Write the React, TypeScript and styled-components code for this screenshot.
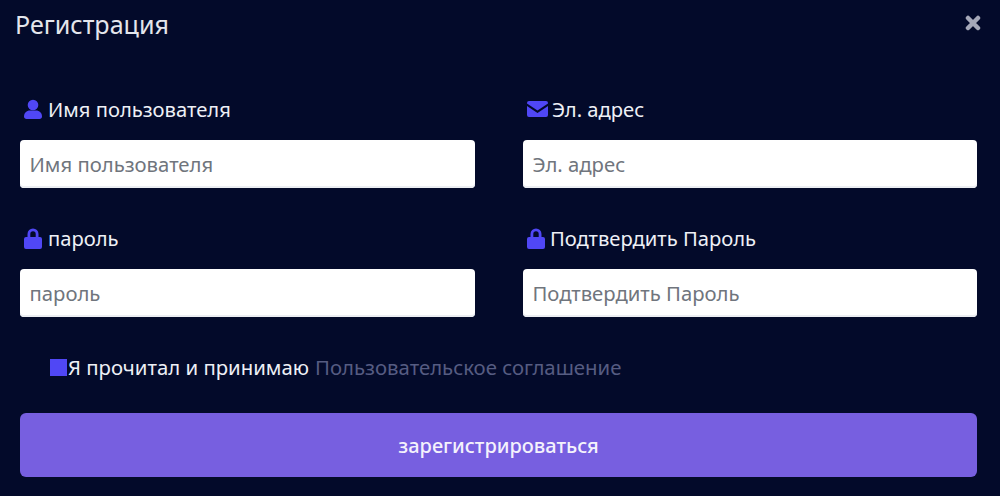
import React from "react";
import styled, { createGlobalStyle } from "styled-components";

const Global = createGlobalStyle`
  html, body { margin: 0; padding: 0; background: #030a2a; }
  * { box-sizing: border-box; }
`;

const Modal = styled.div`
  width: 1000px;
  height: 496px;
  overflow: hidden;
  background: #030a2a;
  font-family: "Noto Sans", "Open Sans", sans-serif;
  color: #eef0f6;
`;

const Header = styled.header`
  display: flex;
  justify-content: space-between;
  align-items: flex-start;
  height: 96px;
  padding: 8px 17px 0 15px;
`;

const Title = styled.h1`
  margin: 0;
  font-size: 25.1px;
  line-height: 33px;
  font-weight: 400;
  color: #e4e6ec;
`;

const Close = styled.button`
  width: 18px;
  height: 18px;
  margin-top: 7px;
  padding: 0;
  border: 0;
  background: none;
  color: #a5a8b8;
  display: flex;
`;

const Form = styled.form`
  padding: 0 23px 0 20px;
`;

const Grid = styled.div`
  display: grid;
  grid-template-columns: 455px 454px;
  column-gap: 48px;
  row-gap: 37px;
`;

const Field = styled.div`
  display: flex;
  flex-direction: column;
`;

const Label = styled.label<{ $gap: number }>`
  display: flex;
  align-items: center;
  height: 28px;
  margin-bottom: 16px;
  padding: 0 0 2px 4px;
  gap: ${(p) => p.$gap}px;
  font-size: 20.2px;
  line-height: 26px;
`;

const Input = styled.input`
  width: 100%;
  height: 48px;
  padding: 0 9.5px 1px;
  border: 0;
  border-radius: 4px;
  background: #fff;
  font: 400 20.3px "Noto Sans", "Open Sans", sans-serif;
  box-shadow: inset 0 -2px 0 #eceef2;
  &::placeholder { color: #70757d; opacity: 1; }
`;

const Agreement = styled.div`
  display: flex;
  align-items: center;
  height: 28px;
  margin-top: 36px;
  padding-left: 30px;
  font-size: 20.35px;
  line-height: 28px;
`;

const Check = styled.span`
  width: 17px;
  height: 17px;
  margin-right: 1px;
  background: #5047f5;
  flex: none;
`;

const Link = styled.span`
  margin-left: 6px;
  color: #565c82;
`;

const Submit = styled.button`
  display: block;
  width: 957px;
  height: 64px;
  margin-top: 32px;
  padding-top: 2px;
  border: 0;
  border-radius: 6px;
  background: #775fe0;
  color: #f4f2fc;
  font: 500 20px "Noto Sans", "Open Sans", sans-serif;
`;

const IconBox = styled.svg`
  flex: none;
  color: #5047f5;
`;

const User = () => (
  <IconBox width="18" height="20" viewBox="0 0 18 20" fill="currentColor">
    <circle cx="9" cy="6" r="5.300" />
    <path d="M0 17.500C0 14 2.500 11.500 6 11.500h6c3.500 0 6 2.500 6 6 0 1.400-1 2.500-2.500 2.500h-13C1 20 0 18.900 0 17.500Z" />
  </IconBox>
);

const Mail = () => (
  <IconBox width="21" height="16" viewBox="0 0 21 16" fill="currentColor">
    <path d="M2 0h17a2 2 0 0 1 2 2v.6l-10.500 7L0 2.600V2a2 2 0 0 1 2-2Z" />
    <path d="M0 5l10.500 7L21 5v9a2 2 0 0 1-2 2H2a2 2 0 0 1-2-2V5Z" />
  </IconBox>
);

const Lock = () => (
  <IconBox width="18" height="21" viewBox="0 0 18 21" fill="currentColor">
    <path fillRule="evenodd" d="M3.500 9V6a5.500 5.500 0 0 1 11 0v3h1.500a2 2 0 0 1 2 2v8a2 2 0 0 1-2 2H2a2 2 0 0 1-2-2v-8a2 2 0 0 1 2-2h1.500Zm2.800 0h5.400V6a2.700 2.700 0 0 0-5.400 0v3Z" />
  </IconBox>
);

export default function App() {
  return (
    <Modal>
      <Global />
      <Header>
        <Title>Регистрация</Title>
        <Close type="button" aria-label="Закрыть">
          <svg width="16" height="16" viewBox="0 0 16 16" fill="none" stroke="currentColor" strokeWidth="4.500" strokeLinecap="round">
            <path d="M3 3l10 10M13 3L3 13" />
          </svg>
        </Close>
      </Header>
      <Form>
        <Grid>
          <Field>
            <Label $gap={6}><User />Имя пользователя</Label>
            <Input placeholder="Имя пользователя" />
          </Field>
          <Field>
            <Label $gap={4}><Mail />Эл. адрес</Label>
            <Input placeholder="Эл. адрес" />
          </Field>
          <Field>
            <Label $gap={6}><Lock />пароль</Label>
            <Input placeholder="пароль" />
          </Field>
          <Field>
            <Label $gap={5}><Lock />Подтвердить Пароль</Label>
            <Input placeholder="Подтвердить Пароль" />
          </Field>
        </Grid>
        <Agreement>
          <Check />Я прочитал и принимаю<Link>Пользовательское соглашение</Link>
        </Agreement>
        <Submit type="button">зарегистрироваться</Submit>
      </Form>
    </Modal>
  );
}
